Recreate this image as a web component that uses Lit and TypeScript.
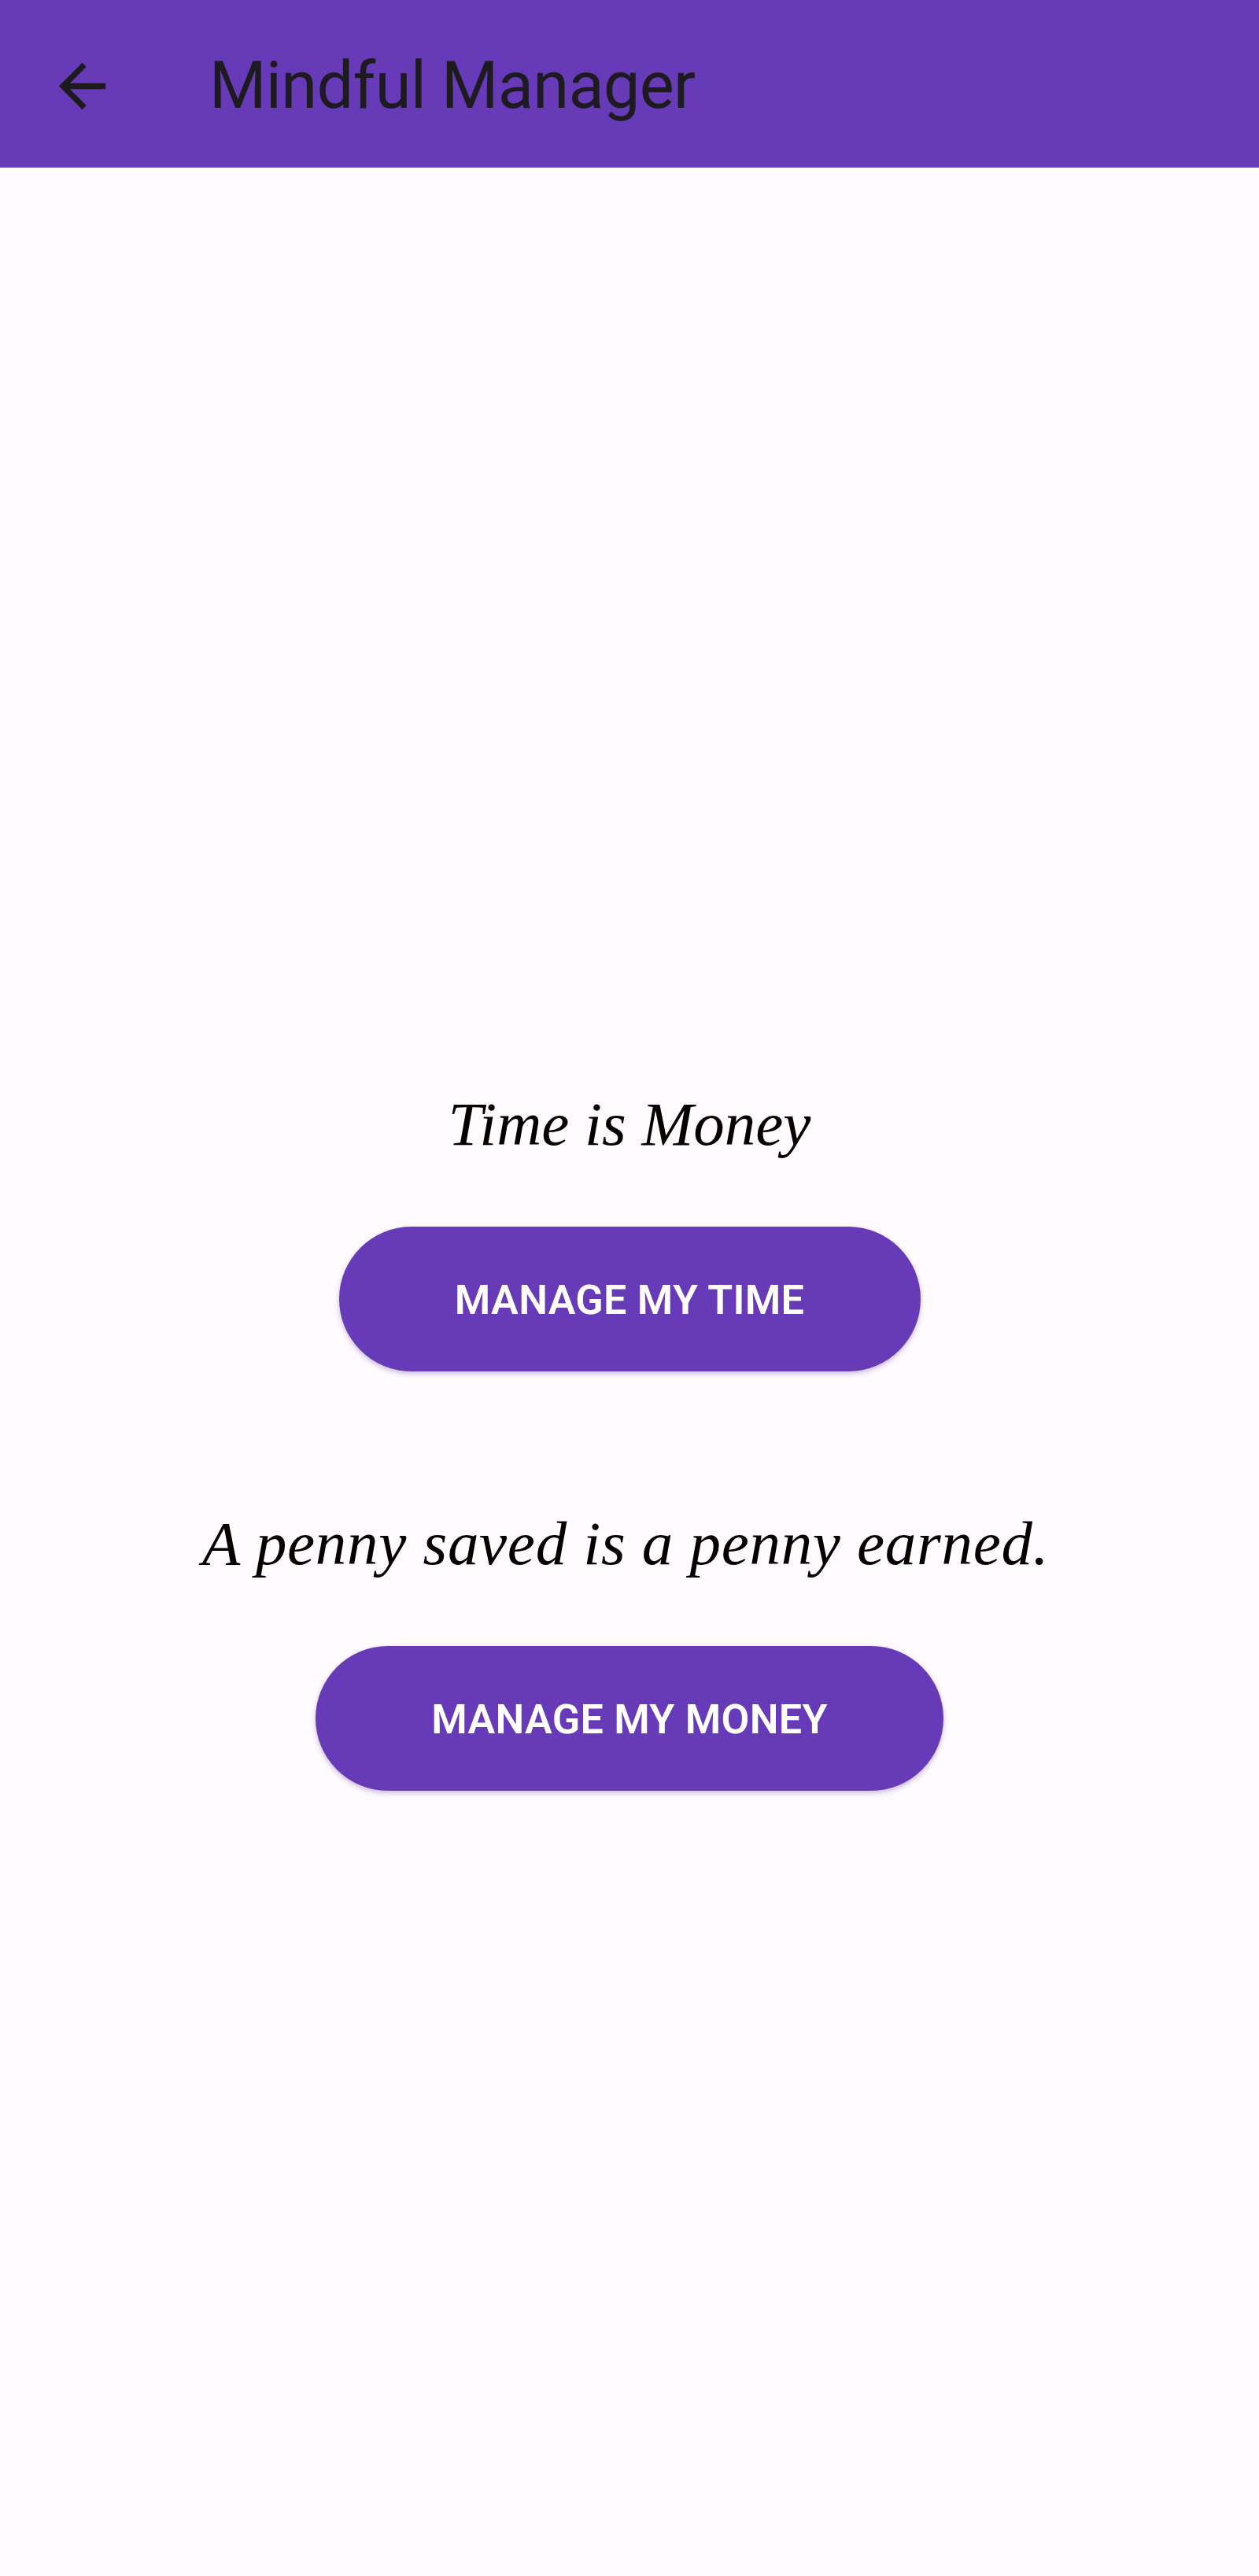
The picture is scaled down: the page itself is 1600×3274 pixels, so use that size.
import { LitElement, html, css } from "lit";
import { customElement } from "lit/decorators.js";

@customElement("app-root")
export class AppRoot extends LitElement {
  static styles = css`
    :host { display: block; width: 1600px; height: 3274px; background: #fffbfe; overflow: hidden; }
    .bar { height: 213px; background: #673ab7; display: flex; align-items: center; color: #1d1b20; }
    .back { width: 89px; height: 89px; margin-left: 60px; margin-top: 5px; flex: none; fill: #1d1b20; }
    .title { margin-left: 117px; margin-top: 3px; font: 400 83px/1 Roboto, sans-serif; letter-spacing: -0.7px; }
    main { display: flex; flex-direction: column; align-items: center; padding-top: 1156px; }
    .quote { font: italic 400 79px/120px "Liberation Serif", serif; color: #000; height: 120px; white-space: nowrap; }
    .wide { letter-spacing: 0.7px; padding-right: 10px; }
    .btn { box-sizing: border-box; height: 184px; padding-top: 3px; border-radius: 92px; background: #673ab7; color: #fff; display: flex; align-items: center; justify-content: center; font: 600 52px/1 Roboto, sans-serif; letter-spacing: 0.3px; box-shadow: 0 3px 6px rgba(80,40,150,.3); margin-top: 70px; margin-bottom: 159px; }
    .t { width: 739px; }
    .m { width: 798px; }
  `;
  render() {
    return html`
      <header class="bar">
        <svg class="back" viewBox="0 0 24 24"><path d="M20 11H7.83l5.59-5.59L12 4l-8 8 8 8 1.41-1.41L7.83 13H20v-2z"/></svg>
        <div class="title">Mindful Manager</div>
      </header>
      <main>
        <div class="quote">Time is Money</div>
        <div class="btn t">MANAGE MY TIME</div>
        <div class="quote wide">A penny saved is a penny earned.</div>
        <div class="btn m">MANAGE MY MONEY</div>
      </main>
    `;
  }
}
